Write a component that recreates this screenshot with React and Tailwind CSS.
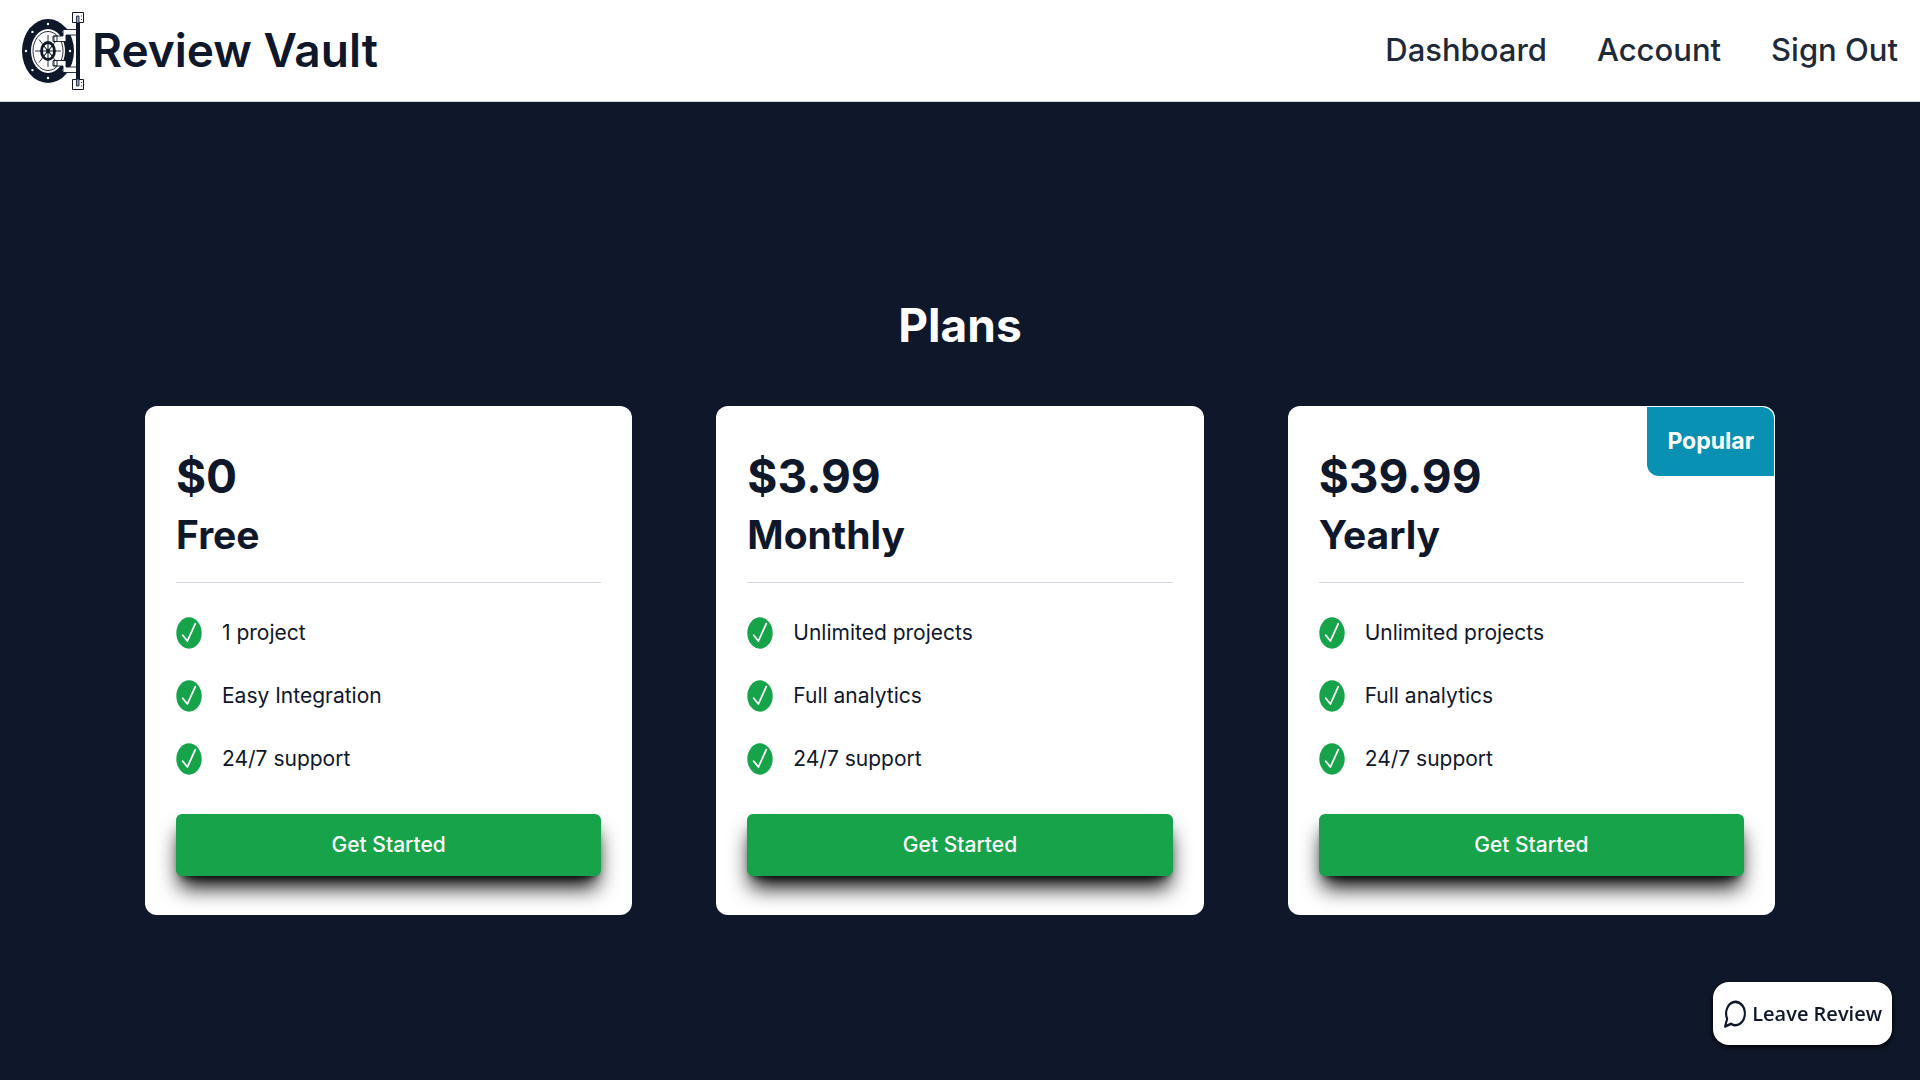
const plans = [
    {
        name: "Free",
        price: "$0",
        features: ["1 project", "Easy Integration", "24/7 support"],
    },
    {
        name: "Monthly",
        price: "$3.99",
        features: ["Unlimited projects", "Full analytics", "24/7 support"],
    },
    {
        name: "Yearly",
        price: "$39.99",
        popular: true,
        features: ["Unlimited projects", "Full analytics", "24/7 support"],
    },
];

const links = ["Dashboard", "Account", "Sign Out"];

const boltAngles = [0, 45, 90, 135, 180, 225, 270, 315];

function VaultLogo() {
    return (
        <svg
            viewBox="0 0 62 80"
            className="h-20 w-[62px] shrink-0"
            fill="none"
            stroke="#0f172a"
            aria-hidden="true"
        >
            {/* Door ring */}
            <ellipse cx="26" cy="40" rx="26" ry="32" fill="#0f172a" stroke="none" />
            <ellipse cx="26" cy="40" rx="17" ry="22" fill="#fff" stroke="none" />
            <ellipse cx="26" cy="40" rx="15" ry="19.5" strokeWidth="0.9" />
            {boltAngles.map(a => (
                <circle
                    key={a}
                    cx={26 + 22 * Math.cos((a * Math.PI) / 180)}
                    cy={40 + 27 * Math.sin((a * Math.PI) / 180)}
                    r="1.2"
                    fill="#fff"
                    stroke="none"
                />
            ))}
            {/* Wheel */}
            <path d="M26 24v32M13 40h26M17 28.500l18 23M17 51.500l18-23" strokeWidth="0.9" />
            <ellipse cx="26" cy="40" rx="6.500" ry="8.500" fill="#fff" strokeWidth="2.800" />
            <path d="M26 32v16M20 40h12M21.500 34.500l9 11M21.500 45.500l9-11" strokeWidth="1.100" />
            <ellipse cx="26" cy="40" rx="1.800" ry="2.200" fill="#0f172a" stroke="none" />
            {/* Hinge arms */}
            <path
                d="M55 18.500H41V25h-9v5.500h12V24h11zM55 61.500H41V55h-9v-5.500h12V56h11z"
                fill="#fff"
                strokeWidth="0.9"
            />
            <path d="M31 25h4v5.500h-4zM31 49.500h4V55h-4z" strokeWidth="0.9" />
            {/* Post */}
            <path
                d="M50.500 1.500h11v10h-11zM50.500 68.500h11v10h-11z"
                fill="#fff"
                strokeWidth="1"
            />
            <path d="M54 11h4v58h-4z" fill="#0f172a" stroke="none" />
            <path d="M54.500 5h2.500v7h-2.500zM54.500 68h2.500v7h-2.500z" fill="#94a3b8" strokeWidth="0.8" />
            <path d="M59.500 4.500v1M59.500 8v1M59.500 71v1M59.500 74.500v1" strokeWidth="0.9" />
        </svg>
    );
}

function CheckIcon() {
    return (
        <svg viewBox="0 0 26 32" className="h-8 w-[26px] shrink-0" aria-hidden="true">
            <ellipse cx="13" cy="16" rx="12.700" ry="15.700" fill="#16a34a" />
            <path
                d="M6.700 18.200l4.700 5.800L19.300 6.600"
                fill="none"
                stroke="#fff"
                strokeWidth="1.800"
                strokeLinecap="round"
                strokeLinejoin="round"
            />
        </svg>
    );
}

function ChatIcon() {
    return (
        <svg
            viewBox="0 0 24 24"
            preserveAspectRatio="none"
            className="h-[31px] w-[25px] shrink-0"
            fill="none"
            stroke="currentColor"
            strokeWidth="2"
            strokeLinecap="round"
            strokeLinejoin="round"
            aria-hidden="true"
        >
            <path d="M7.9 20A9 9 0 1 0 4 16.1L2 22Z" />
        </svg>
    );
}

function PlanCard({ plan }) {
    return (
        <div className="relative rounded-xl bg-white px-[31px] pt-[39px] pb-[39px] text-slate-900">
            {plan.popular && (
                <span className="absolute top-px right-px rounded-tr-xl rounded-bl-xl bg-[#0891b2] px-5 text-[23px] leading-[69px] font-bold text-white">
                    Popular
                </span>
            )}
            <p className="text-[46px] leading-[62px] font-bold">{plan.price}</p>
            <h2 className="text-[39px] leading-[56px] font-bold">{plan.name}</h2>
            <hr className="mt-[19px] border-gray-300" />
            <ul className="mt-[30px] space-y-6">
                {plan.features.map(feature => (
                    <li key={feature} className="flex items-center gap-5 text-[21px] leading-[39px]">
                        <CheckIcon />
                        {feature}
                    </li>
                ))}
            </ul>
            <button
                type="button"
                className="mt-9 h-[62px] w-full rounded-md bg-[#16a34a] text-[21px] font-medium text-white shadow-[0_15px_21px_-4px_#000,0_6px_8px_-6px_#000]"
            >
                Get Started
            </button>
        </div>
    );
}

export default function App() {
    return (
        <div className="min-h-screen bg-[#0f172a] font-['Inter',sans-serif]">
            <header className="flex h-[102px] items-center justify-between border-b border-gray-300 bg-white px-[22px]">
                <a href="#" className="flex items-center gap-2 text-[46px] font-semibold text-slate-900">
                    <VaultLogo />
                    Review Vault
                </a>
                <nav className="flex gap-[50px] text-[31px] font-medium text-gray-800">
                    {links.map(link => (
                        <a key={link} href="#">
                            {link}
                        </a>
                    ))}
                </nav>
            </header>
            <main className="px-[145px] pt-[192px] pb-20">
                <h1 className="text-center text-[46px] leading-[62px] font-bold text-white">Plans</h1>
                <div className="mt-[50px] grid grid-cols-3 gap-[84px]">
                    {plans.map(plan => (
                        <PlanCard key={plan.name} plan={plan} />
                    ))}
                </div>
            </main>
            <button
                type="button"
                className="fixed right-7 bottom-[35px] flex h-[63px] items-center gap-1 rounded-2xl bg-white px-[10px] font-['Open_Sans',sans-serif] text-[20px] font-semibold text-slate-900 shadow-[0_2px_5px_#000]"
            >
                <ChatIcon />
                Leave Review
            </button>
        </div>
    );
}
